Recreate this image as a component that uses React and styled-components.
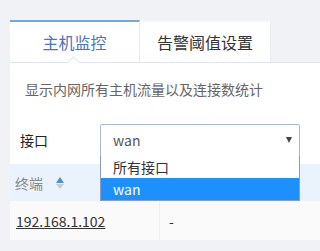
import styled, { createGlobalStyle } from "styled-components";

const GlobalStyle = createGlobalStyle`
  html, body {
    margin: 0;
    padding: 0;
    background: #f0f2f6;
    font-family: "Noto Sans CJK SC", "Noto Sans", sans-serif;
  }
`;

const Page = styled.div`
  padding: 20px 0 0 10px;
  height: 231px;
  overflow: hidden;
`;

const TabBar = styled.div`
  display: flex;
  height: 42px;
  border-bottom: 1px solid #dfe5ee;
  position: relative;
`;

const Tab = styled.div`
  width: ${(p) => p.w}px;
  box-sizing: border-box;
  display: flex;
  align-items: center;
  justify-content: center;
  background: #fff;
  font-size: 16px;
  color: ${(p) => (p.active ? "#4a74bd" : "#333")};
  border-top: 2px solid ${(p) => (p.active ? "#74a7dc" : "#f4f6fa")};
  border-right: 1px solid #e8ecf2;
  position: relative;
`;

const Notch = styled.span`
  position: absolute;
  left: 59px;
  bottom: -5px;
  width: 8px;
  height: 8px;
  background: #fff;
  border-left: 1px solid #dfe5ee;
  border-top: 1px solid #dfe5ee;
  transform: rotate(45deg);
`;

const Panel = styled.div`
  background: #fff;
  position: relative;
`;

const Desc = styled.p`
  margin: 0;
  padding: 17px 15px 0;
  font-size: 14px;
  line-height: 18px;
  color: #666;
`;

const FilterRow = styled.div`
  display: flex;
  align-items: center;
  padding: 26px 0 0 10px;
  height: 32px;
`;

const Label = styled.span`
  width: 80px;
  font-size: 14px;
  color: #222;
`;

const SelectWrap = styled.div`
  position: relative;
  width: 200px;
`;

const SelectBox = styled.div`
  box-sizing: border-box;
  height: 33px;
  border: 1px solid #a9b8d6;
  border-radius: 2px;
  display: flex;
  align-items: center;
  justify-content: space-between;
  padding: 0 7px 0 12px;
  font-size: 14px;
  color: #555;
  background: #fff;
`;

const Caret = styled.span`
  width: 0;
  height: 0;
  border-left: 3.5px solid transparent;
  border-right: 3.5px solid transparent;
  border-top: 6px solid #444;
`;

const Menu = styled.ul`
  position: absolute;
  top: 32px;
  left: 0;
  right: 0;
  margin: 0;
  padding: 0;
  list-style: none;
  background: #fff;
  border: 1px solid #8a9cc4;
  border-top: none;
  z-index: 2;
`;

const Option = styled.li`
  height: 22px;
  line-height: 22px;
  padding-left: 12px;
  font-size: 14px;
  color: ${(p) => (p.selected ? "#fff" : "#333")};
  background: ${(p) => (p.selected ? "#1e8fff" : "#fff")};
`;

const Table = styled.div`
  margin-top: 8px;
`;

const HeadRow = styled.div`
  display: flex;
  align-items: center;
  height: 37px;
  background: #eaf3fc;
  padding-left: 5px;
  font-size: 14px;
  color: #888;
`;

const Sort = styled.span`
  display: inline-flex;
  flex-direction: column;
  margin-left: 13px;
  gap: 1px;
`;

const Tri = styled.span`
  width: 0;
  height: 0;
  border-left: 4px solid transparent;
  border-right: 4px solid transparent;
  ${(p) =>
    p.up
      ? "border-bottom: 6px solid #4b8fd8;"
      : "border-top: 5px solid #c8ccd2;"}
`;

const Row = styled.div`
  display: flex;
  height: 39px;
  background: #fafafa;
`;

const Cell = styled.div`
  display: flex;
  align-items: center;
  width: ${(p) => (p.w ? `${p.w}px` : "auto")};
  flex: ${(p) => (p.w ? "none" : 1)};
  padding-left: ${(p) => p.pl}px;
  border-right: ${(p) => (p.w ? "1px solid #f0f0f0" : "none")};
  font-size: 14px;
  color: #333;
`;

const IpLink = styled.span`
  text-decoration: underline;
`;

export default function App() {
  return (
    <Page>
      <GlobalStyle />
      <TabBar>
        <Tab w={130} active>
          主机监控
          <Notch />
        </Tab>
        <Tab w={131}>告警阈值设置</Tab>
      </TabBar>
      <Panel>
        <Desc>显示内网所有主机流量以及连接数统计</Desc>
        <FilterRow>
          <Label>接口</Label>
          <SelectWrap>
            <SelectBox>
              wan
              <Caret />
            </SelectBox>
            <Menu>
              <Option>所有接口</Option>
              <Option selected>wan</Option>
            </Menu>
          </SelectWrap>
        </FilterRow>
        <Table>
          <HeadRow>
            终端
            <Sort>
              <Tri up />
              <Tri />
            </Sort>
          </HeadRow>
          <Row>
            <Cell w={143} pl={6}>
              <IpLink>192.168.1.102</IpLink>
            </Cell>
            <Cell pl={9}>-</Cell>
          </Row>
        </Table>
      </Panel>
    </Page>
  );
}
